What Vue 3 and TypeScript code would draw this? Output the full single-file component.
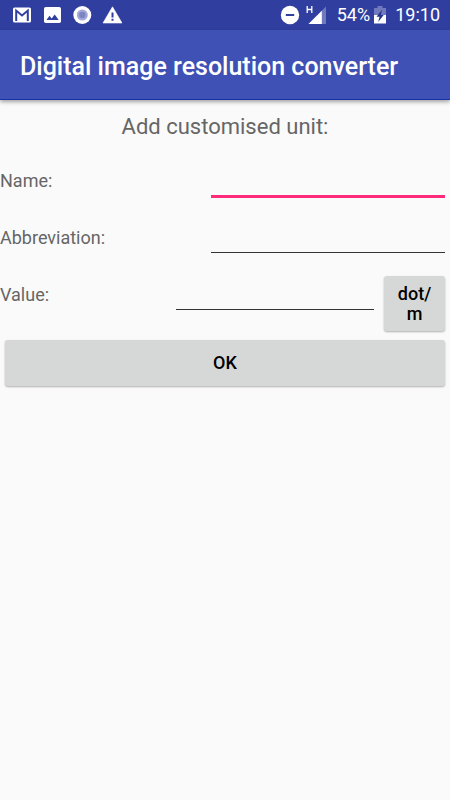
<script setup lang="ts">
import { ref } from 'vue'

type Field = 'name' | 'abbreviation' | 'value'

const name = ref('')
const abbreviation = ref('')
const value = ref('')
const active = ref<Field>('name')
</script>

<template>
  <div class="screen">
    <div class="status">
      <div class="group notices">
        <svg width="20" height="20" viewBox="0 0 20 20" aria-hidden="true">
          <rect x="1" y="2.5" width="18" height="15" rx="1.6" fill="#fff" />
          <path d="M4.200 16V5.600L10 10.400l5.800-4.800V16" fill="none" stroke="#303f9f" stroke-width="2" />
        </svg>
        <svg width="20" height="20" viewBox="0 0 20 20" aria-hidden="true">
          <rect x="2" y="2" width="17" height="16" rx="1.800" fill="#fff" />
          <path d="M4.500 15l3-4.200 2.200 2.600 3-4 4 5.600z" fill="#303f9f" />
        </svg>
        <svg width="20" height="20" viewBox="0 0 20 20" aria-hidden="true">
          <circle cx="10.300" cy="10" r="9" fill="#fff" />
          <circle cx="10.300" cy="10" r="5.500" fill="#a3a9d6" />
          <circle cx="10.300" cy="10" r="3.200" fill="#7c85c2" />
        </svg>
        <svg width="20" height="20" viewBox="0 0 20 20" aria-hidden="true">
          <path d="M10.500 1.800L20 18H1z" fill="#fff" stroke="#fff" stroke-width=".6" stroke-linejoin="round" />
          <path d="M9.500 7.500h2v5h-2zM9.500 13.800h2v2h-2z" fill="#303f9f" />
        </svg>
      </div>
      <div class="group">
        <svg width="20" height="20" viewBox="0 0 20 20" aria-hidden="true">
          <circle cx="10" cy="10" r="9.200" fill="#fff" />
          <path d="M5.800 10h8.400" stroke="#303f9f" stroke-width="2" />
        </svg>
        <svg class="signal" width="22" height="22" viewBox="0 0 22 22" aria-hidden="true">
          <path d="M21 2.500V20H3.500z" fill="#6f79bc" />
          <path d="M16.800 6.700V20H3.500z" fill="#fff" />
          <path d="M2.200 2v7M6.800 2v7M2.200 5.500h4.600" fill="none" stroke="#fff" stroke-width="1.300" />
        </svg>
        <span>54%</span>
        <svg class="battery" width="12" height="20" viewBox="0 0 12 20" aria-hidden="true">
          <path d="M3.500 1h5v2H12v7H0V3h3.500z" fill="#6f79bc" />
          <path d="M0 10h12v8.500H0z" fill="#fff" />
          <path d="M8 4.800L2.500 11.800h3L4.200 17l5.500-7H6.800z" fill="#26348f" />
        </svg>
        <span>19:10</span>
      </div>
    </div>

    <header class="bar">
      <h1>Digital image resolution converter</h1>
    </header>

    <form @submit.prevent>
      <h2>Add customised unit:</h2>
      <div class="row">
        <label for="name">Name:</label>
        <input id="name" v-model="name" type="text" :class="{ active: active === 'name' }" @focus="active = 'name'" />
      </div>
      <div class="row">
        <label for="abbreviation">Abbreviation:</label>
        <input
          id="abbreviation"
          v-model="abbreviation"
          type="text"
          :class="{ active: active === 'abbreviation' }"
          @focus="active = 'abbreviation'"
        />
      </div>
      <div class="row value-row">
        <label for="value">Value:</label>
        <input
          id="value"
          v-model="value"
          type="text"
          inputmode="decimal"
          :class="{ active: active === 'value' }"
          @focus="active = 'value'"
        />
        <button class="unit" type="button">dot/<br />m</button>
      </div>
      <button class="ok" type="submit">OK</button>
    </form>
  </div>
</template>

<style>
body {
  background: #fafafa;
}
</style>

<style scoped>
.screen {
  min-height: 100vh;
  background: #fafafa;
  color: #666;
  font-family: Roboto, sans-serif;
}

.status {
  display: flex;
  align-items: center;
  justify-content: space-between;
  height: 30px;
  padding: 0 10px 0 12px;
  background: #303f9f;
  color: #fff;
  font-size: 18px;
  line-height: 32px;
}

.group {
  display: flex;
  align-items: center;
}

.notices {
  gap: 10px;
}

.signal {
  margin: 0 10px 0 5px;
}

.battery {
  margin: 0 9px 0 4px;
}

.bar {
  display: flex;
  align-items: center;
  position: relative;
  height: 70px;
  padding: 4px 20px 0;
  box-sizing: border-box;
  background: #3f51b5;
  border-bottom: 1px solid #1633a6;
  box-shadow: 0 2px 4px rgba(0, 0, 0, 0.35);
  color: #fff;
}

h1 {
  margin: 0;
  font-size: 25px;
  font-weight: 500;
  line-height: 30px;
}

h2 {
  margin: 0;
  padding: 13px 0 12px;
  font-size: 22px;
  font-weight: 400;
  line-height: 28px;
  text-align: center;
}

.row {
  display: grid;
  grid-template-columns: 206px 1fr;
  align-items: start;
  column-gap: 5px;
  height: 57px;
  padding-right: 5px;
}

.value-row {
  grid-template-columns: 171px 1fr 61px;
  height: auto;
}

label {
  font-size: 18px;
  line-height: 55px;
}

input {
  width: 100%;
  min-width: 0;
  height: 43px;
  box-sizing: border-box;
  padding: 12px 0 0;
  border: 0;
  border-bottom: 1px solid #333;
  border-radius: 0;
  outline: 0;
  background: transparent;
  color: #212121;
  font: 400 18px/24px Roboto, sans-serif;
}

input.active {
  height: 45px;
  border-bottom: 3px solid #ff2a7a;
}

button {
  padding: 0;
  border: 0;
  border-radius: 3px;
  background: #d6d8d7;
  box-shadow: 0 1px 2px rgba(0, 0, 0, 0.3);
  color: #000;
  font: 500 18px/20px Roboto, sans-serif;
}

.unit {
  height: 55px;
  margin: 9px 0 0;
}

.value-row input {
  width: calc(100% - 5px);
}

.ok {
  display: block;
  width: calc(100% - 10px);
  height: 46px;
  margin: 9px 5px 0;
}
</style>
